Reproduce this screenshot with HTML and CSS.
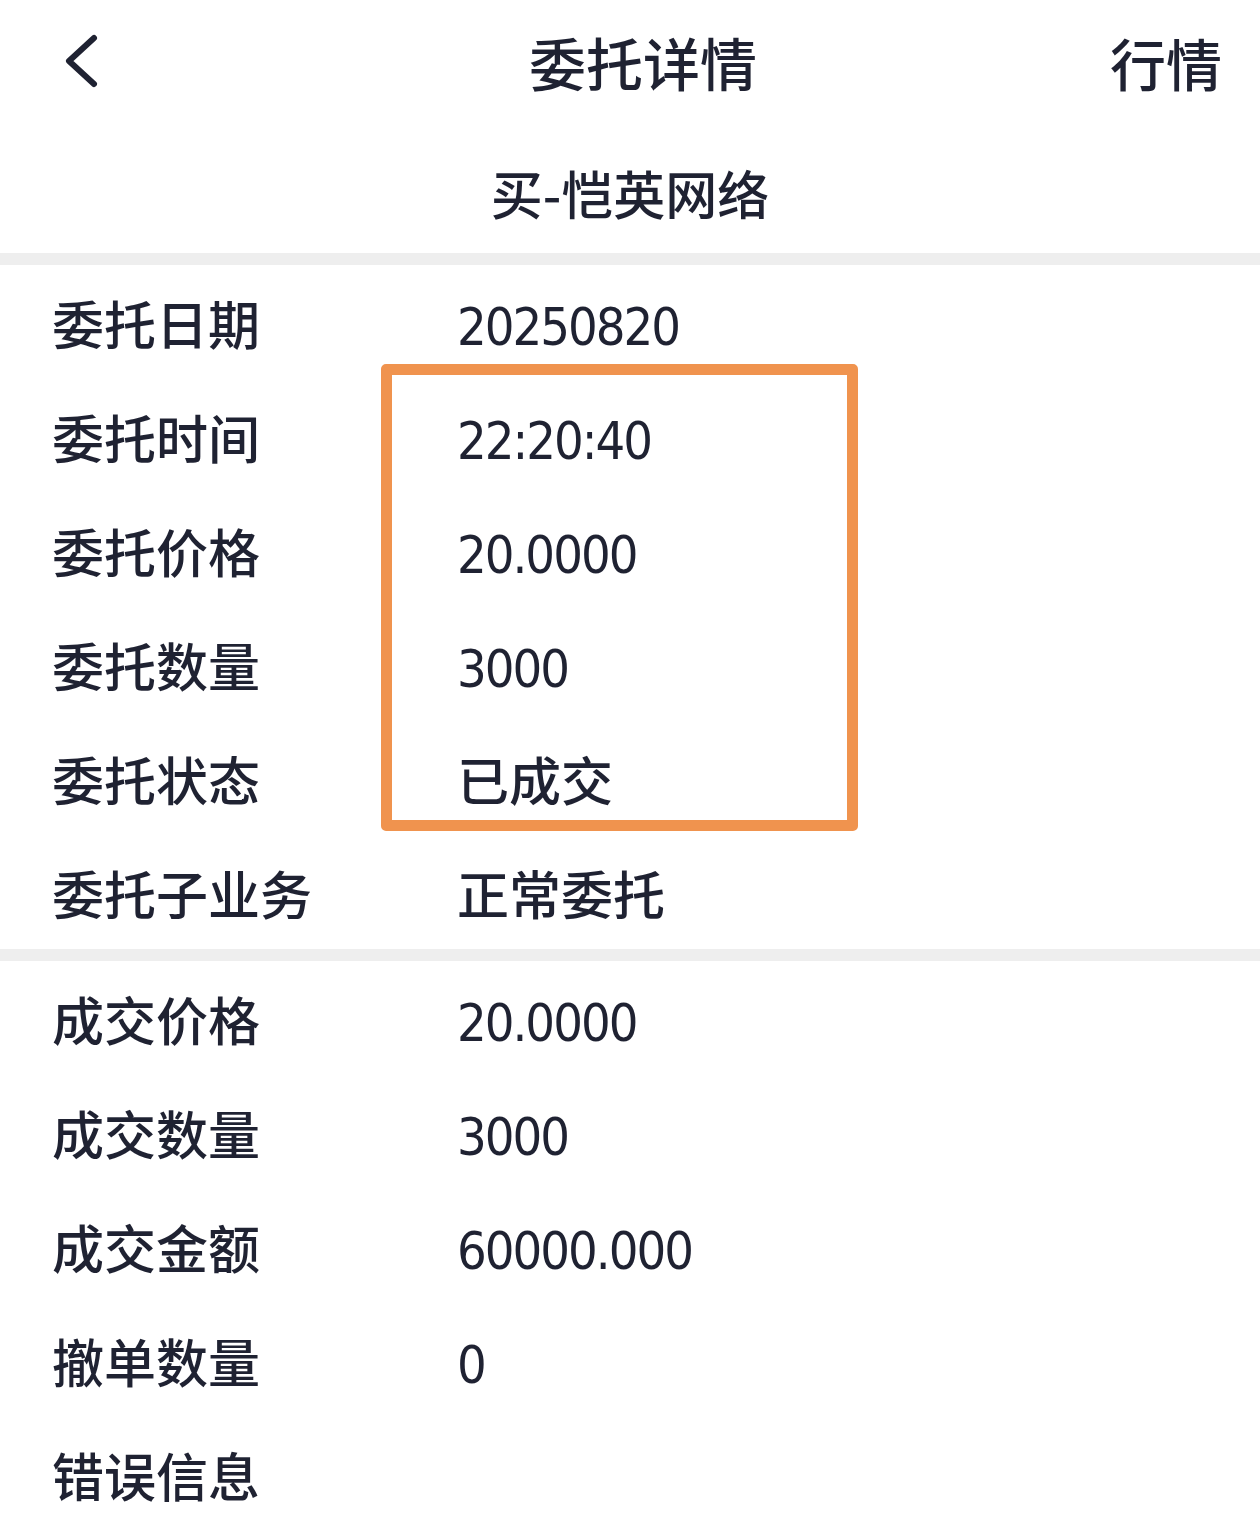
FILE: index.html
```html
<!DOCTYPE html>
<html lang="zh-CN">
<head>
  <meta charset="UTF-8" />
  <meta name="viewport" content="width=device-width, initial-scale=1.0"/>
  <title>委托详情</title>
  <link rel="stylesheet" href="styles.css">
</head>
<body>
  <header class="topbar">
    <a class="back-btn" href="#">
      <svg width="40" height="60" viewBox="0 0 40 60">
        <path d="M30 7 L5 30 L30 53" fill="none" stroke="#1f2232" stroke-width="6" stroke-linecap="round" stroke-linejoin="round"/>
      </svg>
    </a>
    <h1 class="topbar-title">委托详情</h1>
    <a class="topbar-link" href="#">行情</a>
  </header>

  <div class="stock-name">买-恺英网络</div>

  <section class="detail-group">
    <div class="row"><span class="label">委托日期</span><span class="value num">20250820</span></div>
    <div class="row"><span class="label">委托时间</span><span class="value num">22:20:40</span></div>
    <div class="row"><span class="label">委托价格</span><span class="value num">20.0000</span></div>
    <div class="row"><span class="label">委托数量</span><span class="value num">3000</span></div>
    <div class="row"><span class="label">委托状态</span><span class="value">已成交</span></div>
    <div class="row"><span class="label">委托子业务</span><span class="value">正常委托</span></div>
    <div class="highlight"></div>
  </section>

  <section class="detail-group">
    <div class="row"><span class="label">成交价格</span><span class="value num">20.0000</span></div>
    <div class="row"><span class="label">成交数量</span><span class="value num">3000</span></div>
    <div class="row"><span class="label">成交金额</span><span class="value num">60000.000</span></div>
    <div class="row"><span class="label">撤单数量</span><span class="value num">0</span></div>
    <div class="row"><span class="label">错误信息</span><span class="value"></span></div>
  </section>
</body>
</html>
```

FILE: styles.css
```css
body {
  margin: 0;
  background-color: #fff;
  color: #1f2232;
  font-family: "Noto Sans CJK SC", "Noto Sans", sans-serif;
}

.topbar {
  height: 122px;
  display: flex;
  align-items: center;
  justify-content: space-between;
  padding: 0 38px 0 64px;
}

.back-btn {
  display: flex;
  width: 180px;
}

.topbar-title {
  margin: 0;
  font-size: 57px;
  font-weight: 500;
  line-height: 1;
}

.topbar-link {
  width: 180px;
  text-align: right;
  font-size: 56px;
  font-weight: 500;
  color: #1f2232;
  text-decoration: none;
}

.stock-name {
  height: 131px;
  padding-top: 10px;
  box-sizing: border-box;
  display: flex;
  align-items: center;
  justify-content: center;
  font-size: 52px;
  font-weight: 500;
}

.detail-group {
  position: relative;
  border-top: 12px solid #eeeeee;
}

.row {
  height: 114px;
  display: flex;
  align-items: center;
  padding-left: 52px;
  font-size: 52px;
  font-weight: 500;
}

.label {
  width: 405px;
}

.num {
  padding-top: 10px;
  font-family: "DejaVu Sans Condensed", "DejaVu Sans", sans-serif;
  font-size: 52px;
  font-weight: 400;
  letter-spacing: -2px;
}

.highlight {
  position: absolute;
  left: 381px;
  top: 99px;
  width: 477px;
  height: 467px;
  box-sizing: border-box;
  border: 11px solid #f0934e;
  border-radius: 5px;
}
```
